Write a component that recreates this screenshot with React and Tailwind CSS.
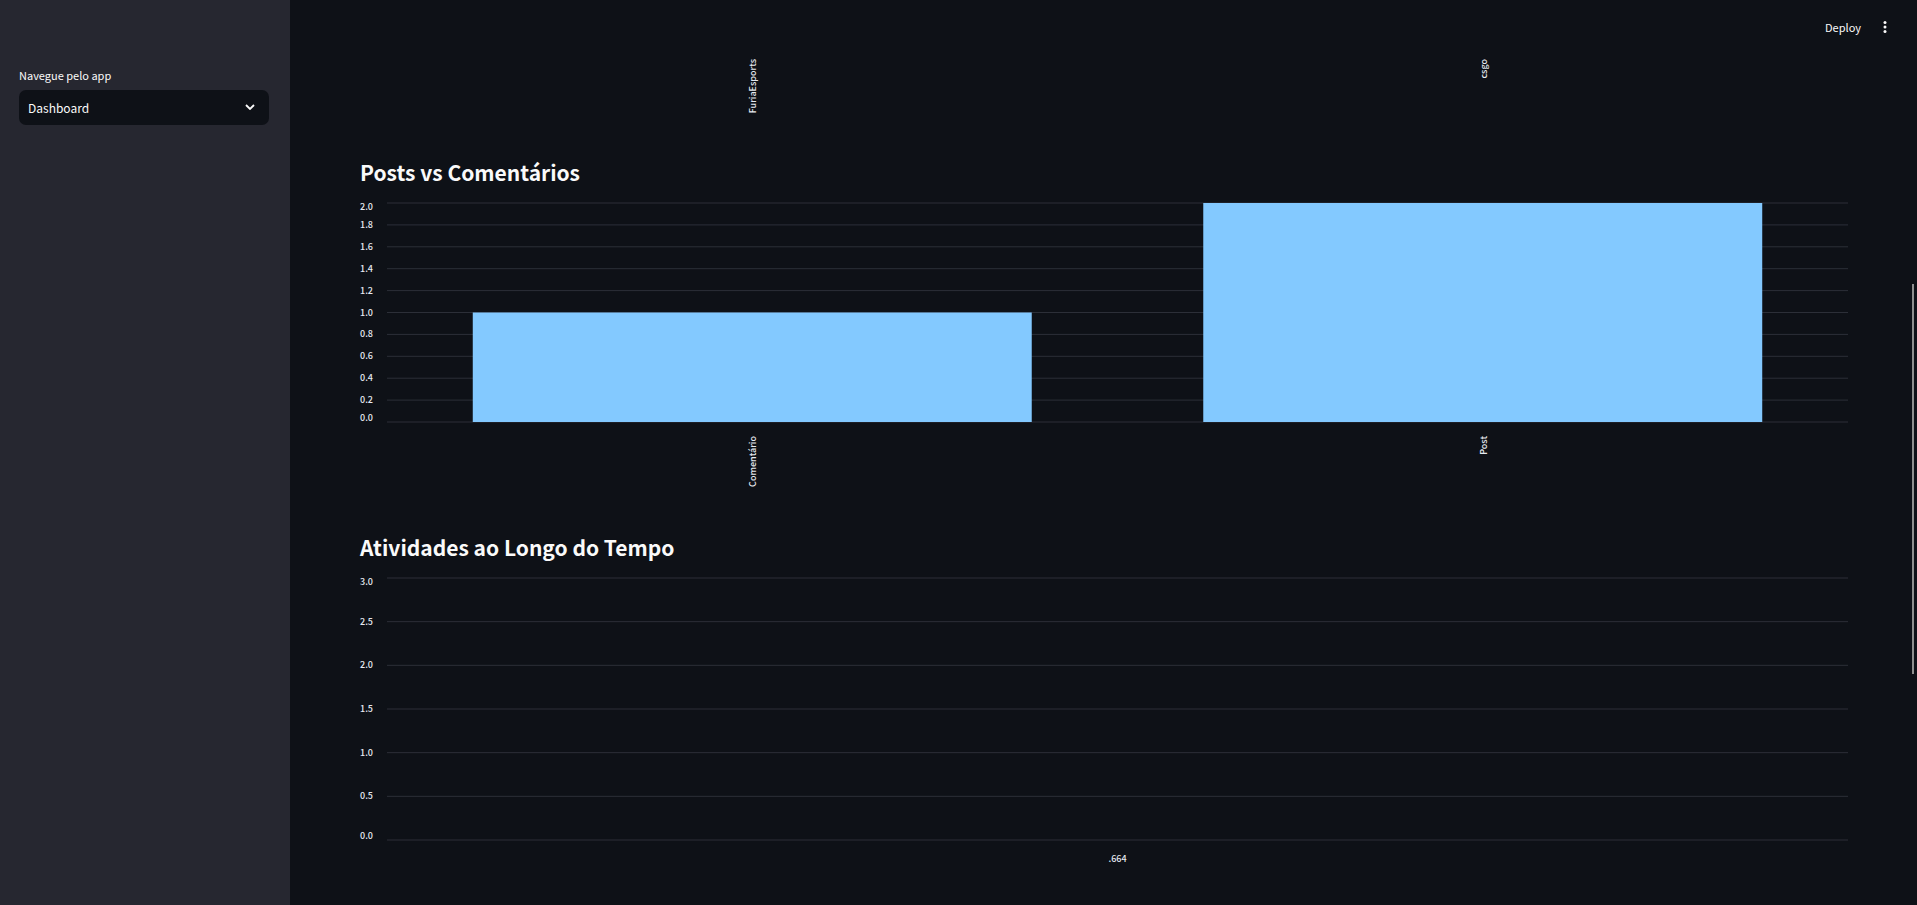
import React from "react";

const postsTicks = ["2.0", "1.8", "1.6", "1.4", "1.2", "1.0", "0.8", "0.6", "0.4", "0.2", "0.0"];
const activityTicks = ["3.0", "2.5", "2.0", "1.5", "1.0", "0.5", "0.0"];
const bars = [
  { label: "Comentário", value: 1 },
  { label: "Post", value: 2 },
];

// The first and last tick labels are kept inside the plot, as Vega does.
function tickBaseline(index, count) {
  if (index === 0) return 7;
  if (index === count - 1) return -1;
  return 3;
}

function YAxis({ ticks }) {
  return (
    <svg className="h-full w-[27px] shrink-0 overflow-visible" aria-hidden="true">
      {ticks.map((tick, i) => (
        <svg key={tick} y={`${(i / (ticks.length - 1)) * 100}%`} className="overflow-visible">
          <text x="0" y={tickBaseline(i, ticks.length)} className="fill-[#e6eaf1] text-[9px] font-medium">
            {tick}
          </text>
        </svg>
      ))}
    </svg>
  );
}

function GridLines({ count }) {
  return Array.from({ length: count }, (_, i) => {
    const y = `${(i / (count - 1)) * 100}%`;
    return <line key={i} x1="0" x2="100%" y1={y} y2={y} className="stroke-[#2c2f38]" strokeWidth="1" />;
  });
}

function RotatedLabel({ x, y, children }) {
  return (
    <svg x={x} y={y} className="overflow-visible">
      <text transform="rotate(-90)" x="0" y="4" textAnchor="end" className="fill-[#e6eaf1] text-[9px] font-medium">
        {children}
      </text>
    </svg>
  );
}

function Chart({ ticks, className, label, children }) {
  return (
    <div className={`flex ${className}`}>
      <YAxis ticks={ticks} />
      <svg role="img" aria-label={label} className="h-full min-w-0 flex-1 overflow-visible">
        <GridLines count={ticks.length} />
        {children}
      </svg>
    </div>
  );
}

export default function App() {
  return (
    <div className="flex h-screen overflow-hidden bg-[#0e1117] font-['Noto_Sans_CJK_SC',sans-serif] text-[#fafafa]">
      <aside className="w-[290px] shrink-0 bg-[#262730] pt-[65px] pr-[21px] pl-[19px]">
        <label htmlFor="page" className="block text-[11px] leading-5">
          Navegue pelo app
        </label>
        <div className="relative mt-[5px]">
          <select
            id="page"
            defaultValue="Dashboard"
            className="block h-[35px] w-full appearance-none rounded-[7px] bg-[#0e1117] px-[9px] text-[12px]"
          >
            <option>Dashboard</option>
          </select>
          <svg viewBox="0 0 10 6" className="pointer-events-none absolute top-[14px] right-[14px] h-[6px] w-[10px]" aria-hidden="true">
            <path d="M1 1l4 4 4-4" fill="none" stroke="#fafafa" strokeWidth="1.8" />
          </svg>
        </div>
      </aside>

      <div className="flex min-w-0 flex-1 flex-col">
        <header className="flex h-14 shrink-0 items-center justify-end gap-[22px] pr-[30px] pb-0.5">
          <button type="button" className="text-[11px] leading-5">Deploy</button>
          <button type="button" aria-label="Menu" className="h-3 w-1">
            <svg viewBox="0 0 4 12" className="h-3 w-1" fill="#fafafa">
              <circle cx="2" cy="1.6" r="1.5" />
              <circle cx="2" cy="6" r="1.5" />
              <circle cx="2" cy="10.4" r="1.5" />
            </svg>
          </button>
        </header>

        <main className="min-h-0 flex-1 overflow-hidden pr-[69px] pl-[70px]">
          <div className="ml-[27px] h-24">
            <svg role="img" aria-label="Comunidades" className="h-full w-full overflow-visible">
              <RotatedLabel x="25%" y="3">FuriaEsports</RotatedLabel>
              <RotatedLabel x="75%" y="3">csgo</RotatedLabel>
            </svg>
          </div>

          <section>
            <h2 className="text-[21px] leading-10 font-bold">Posts vs Comentários</h2>
            <Chart ticks={postsTicks} label="Posts vs Comentários" className="mt-[11px] h-[219px]">
              {bars.map(({ label, value }, i) => (
                <React.Fragment key={label}>
                  <rect
                    x={`${5.87 + i * 50}%`}
                    y={`${(1 - value / 2) * 100}%`}
                    width="38.26%"
                    height={`${(value / 2) * 100}%`}
                    fill="#83c9ff"
                  />
                  <svg y="100%" className="overflow-visible">
                    <RotatedLabel x={`${25 + i * 50}%`} y="14">{label}</RotatedLabel>
                  </svg>
                </React.Fragment>
              ))}
            </Chart>
          </section>

          <section className="mt-[105px]">
            <h2 className="text-[21px] leading-10 font-bold">Atividades ao Longo do Tempo</h2>
            <Chart ticks={activityTicks} label="Atividades ao Longo do Tempo" className="mt-[11px] h-[262px]">
              <svg y="100%" className="overflow-visible">
                <text x="50%" y="22" textAnchor="middle" className="fill-[#e6eaf1] text-[9px] font-medium">
                  .664
                </text>
              </svg>
            </Chart>
          </section>
        </main>
      </div>

      <div className="fixed top-[284px] right-[3px] h-[390px] w-[2px] bg-[#8f8f8f]" />
    </div>
  );
}
